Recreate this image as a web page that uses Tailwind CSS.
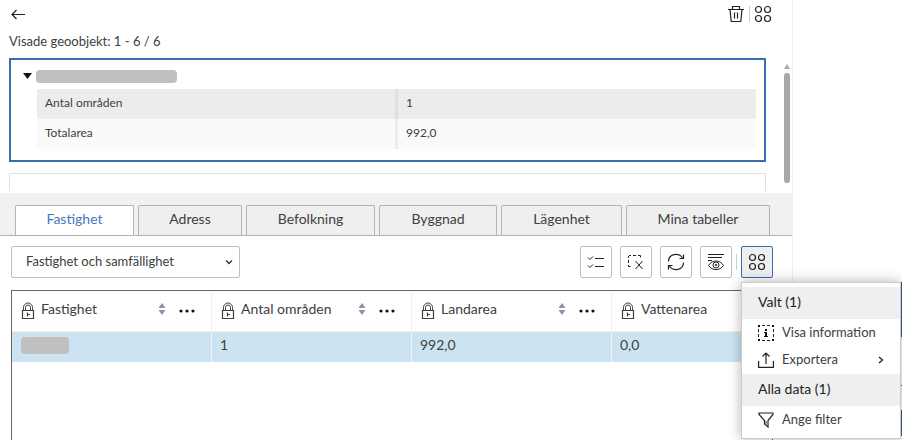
<!DOCTYPE html>
<html lang="sv">
<head>
<meta charset="utf-8">
<meta name="viewport" content="width=device-width, initial-scale=1">
<title>Fastighetsinformation</title>
<script src="https://cdn.jsdelivr.net/npm/@tailwindcss/browser@4"></script>
</head>
<body class="h-screen overflow-hidden bg-white font-[Lato,sans-serif] text-[13px] leading-4 text-[#404040]">
<svg class="hidden" aria-hidden="true">
  <symbol id="grid" viewBox="0 0 18 18"><g fill="none" stroke="currentColor" stroke-width="1.2"><circle cx="4.500" cy="4.500" r="3"/><circle cx="13.500" cy="4.500" r="3"/><circle cx="4.500" cy="13.500" r="3"/><circle cx="13.500" cy="13.500" r="3"/></g></symbol>
  <symbol id="lock" viewBox="0 0 14 18"><g fill="none" stroke="currentColor"><path d="M1.500 8.500h11v8h-11z" stroke-width="1.200"/><path d="M2.500 8V5.500a4.500 4.500 0 0 1 9 0V8M4.500 8V5.500a2.500 2.500 0 0 1 5 0V8"/><path d="M6.500 10.500v4M7 12.500h2" stroke-width="1.200"/></g></symbol>
  <symbol id="sort" viewBox="0 0 8 12"><path d="M4 0 7.500 5h-7zM4 12 .5 7h7z" fill="#8c93a3"/></symbol>
  <symbol id="dots" viewBox="0 0 16 4"><g fill="#111"><circle cx="2" cy="2" r="1.600"/><circle cx="8" cy="2" r="1.600"/><circle cx="14" cy="2" r="1.600"/></g></symbol>
</svg>
<div class="flex h-full">
  <main class="flex min-w-0 flex-1 flex-col border-r border-[#eeeeee]">
    <section class="relative h-[193px] shrink-0 overflow-hidden pl-[9px] pr-[26px]">
      <header class="-mr-1.5 flex h-[27px] items-center justify-between">
        <button type="button" aria-label="Tillbaka" class="pl-0.5 text-[#222222]"><svg class="h-3 w-[15px]" viewBox="0 0 15 12" fill="none" stroke="currentColor" stroke-width="1.200"><path d="M14 6.500H1M5.500 2 1 6.500 5.500 11"/></svg></button>
        <div class="flex items-center gap-1 text-[#222222]">
          <button type="button" aria-label="Ta bort"><svg class="size-[18px]" viewBox="0 0 18 18" fill="none" stroke="currentColor" stroke-width="1.200"><path d="M1 4.500h16M5.500 4V1.500h7V4M3 4.500l1.200 12h9.600L15 4.500M7.500 7.500v6M10.500 7.500v6"/></svg></button>
          <span class="h-4 w-px bg-[#cccccc]"></span>
          <button type="button" aria-label="Åtgärder"><svg class="size-[18px]"><use href="#grid"/></svg></button>
        </div>
      </header>
      <p class="mt-[6px]">Visade geoobjekt: 1 - 6 / 6</p>
      <article class="mt-[9px] h-[104px] border-2 border-[#3a6bb3] pl-[26px] pr-2 pt-1.5">
        <div class="-ml-3.5 flex h-5 items-center gap-1">
          <button type="button" aria-label="Fäll ihop" aria-expanded="true"><svg class="h-1.5 w-[9px]" viewBox="0 0 9 6"><path d="M0 0h9L4.500 6z" fill="#111"/></svg></button>
          <span class="h-[13px] w-[141px] rounded-sm bg-[#c0c0c0]"></span>
        </div>
        <table class="mt-[3px] w-full table-fixed border-collapse text-[12px]">
          <tbody>
            <tr class="h-[30px] bg-[#ececec]"><th scope="row" class="border-r-3 border-[#e0e0e0] px-2 pb-0.5 pt-0 text-left font-normal">Antal områden</th><td class="px-2 pb-0.5 pt-0">1</td></tr>
            <tr class="h-[30px] bg-[#fafafa]"><th scope="row" class="border-r-3 border-[#ececec] px-2 pb-0.5 pt-0 text-left font-normal">Totalarea</th><td class="px-2 pb-0.5 pt-0">992,0</td></tr>
          </tbody>
        </table>
      </article>
      <article class="mt-[11px] h-[18px] border border-b-0 border-[#e0e0e0]"></article>
      <div class="absolute right-0.5 top-[64px] flex w-1.5 flex-col items-center" aria-hidden="true">
        <svg class="h-[5px] w-1.5" viewBox="0 0 6 5"><path d="M3 0 6 5H0z" fill="#aaa"/></svg>
        <span class="mt-1 h-[110px] w-full rounded-full bg-[#a8a8a8]"></span>
      </div>
    </section>

    <nav class="flex h-[43px] shrink-0 items-end gap-1 border-b border-[#b3b3b3] bg-[#f1f1f1] pl-[15px] text-[14px]" role="tablist">
      <button type="button" role="tab" aria-selected="true" class="h-[30px] w-[119px] rounded-t-xs border border-b-0 border-[#b3b3b3] bg-white pb-1 text-[#4478c4]">Fastighet</button>
      <button type="button" role="tab" class="h-[30px] w-[104px] rounded-t-xs border border-b-0 border-[#b3b3b3] bg-[#efefef] pb-1">Adress</button>
      <button type="button" role="tab" class="h-[30px] w-[129px] rounded-t-xs border border-b-0 border-[#b3b3b3] bg-[#efefef] pb-1">Befolkning</button>
      <button type="button" role="tab" class="h-[30px] w-[118px] rounded-t-xs border border-b-0 border-[#b3b3b3] bg-[#efefef] pb-1">Byggnad</button>
      <button type="button" role="tab" class="h-[30px] w-[121px] rounded-t-xs border border-b-0 border-[#b3b3b3] bg-[#efefef] pb-1">Lägenhet</button>
      <button type="button" role="tab" class="h-[30px] w-[144px] rounded-t-xs border border-b-0 border-[#b3b3b3] bg-[#efefef] pb-1">Mina tabeller</button>
    </nav>

    <section class="flex min-h-0 flex-1 flex-col pl-[11px] pr-[19px] pt-[10px]">
      <div class="flex h-8 shrink-0 items-center justify-between">
        <div class="relative">
          <select aria-label="Tabell" class="h-8 w-[229px] appearance-none rounded-xs border border-[#bfbfbf] bg-white pb-0.5 pl-[14px] pr-8 text-[13px]"><option>Fastighet och samfällighet</option></select>
          <svg class="pointer-events-none absolute right-[7px] top-[13px] h-[6px] w-2" viewBox="0 0 8 6" fill="none" stroke="#333" stroke-width="1.400"><path d="m1 1.500 3 3 3-3"/></svg>
        </div>
        <div class="flex items-center gap-2 text-[#222222]">
          <button type="button" aria-label="Markera" class="grid size-8 place-items-center rounded-xs border border-[#bfbfbf]"><svg class="size-[18px]" viewBox="0 0 18 18" fill="none" stroke="currentColor" stroke-width="1"><path d="M8 5.500h9M8 13.500h9M1 4.500l2 2 3-3M1 12.500l2 2 3-3"/></svg></button>
          <button type="button" aria-label="Rensa urval" class="grid size-8 place-items-center rounded-xs border border-[#bfbfbf]"><svg class="size-[18px]" viewBox="0 0 18 18" fill="none" stroke="currentColor" stroke-width="1"><path d="M2 2.500h2M6 2.500h3M11 2.500h2.500v2M1.500 3v2M1.500 7v3M1.500 12v1.500h2M8.500 8l7 8M15.500 8l-7 8"/></svg></button>
          <button type="button" aria-label="Uppdatera" class="grid size-8 place-items-center rounded-xs border border-[#bfbfbf]"><svg class="size-[18px]" viewBox="0 0 18 18" fill="none" stroke="currentColor" stroke-width="1.200"><path d="M1.500 8.500C1.500 1 11.500-1 15.700 5M16.500 9.500C16.500 17 6.500 19 2.300 13M16.500 1.500V5.500h-4M1.500 16.500v-4h4"/></svg></button>
          <div class="flex items-center gap-1">
            <button type="button" aria-label="Visa kolumner" class="grid size-8 place-items-center rounded-xs border border-[#bfbfbf]"><svg class="size-[18px]" viewBox="0 0 18 18" fill="none" stroke="currentColor" stroke-width="1"><path d="M1 1.500h16M1 4.500h14M1 7.500h4M1.500 12.500C5 6.500 13 6.500 16.500 12.500 13 18 5 18 1.500 12.500z"/><circle cx="9" cy="12" r="3"/><circle cx="9" cy="12" r=".8"/></svg></button>
            <span class="h-4 w-px bg-[#cccccc]"></span>
            <button type="button" aria-label="Fler åtgärder" aria-expanded="true" class="grid size-8 place-items-center rounded-xs border border-[#3a6bb3] bg-[#efefef]"><svg class="size-[18px]"><use href="#grid"/></svg></button>
          </div>
        </div>
      </div>

      <div class="mt-3 min-h-0 flex-1 overflow-hidden border border-b-0 border-[#666666]">
        <table class="w-full table-fixed border-separate border-spacing-0 text-left text-[14px]">
          <thead>
            <tr class="h-[41px]">
              <th scope="col" class="w-[200px] border-b border-r border-[#eeeeee] p-0 font-normal"><div class="flex items-center pb-1 pl-[9px] pr-4"><svg class="mr-1.5 mt-1 h-[18px] w-3.5"><use href="#lock"/></svg><span class="flex-1">Fastighet</span><svg class="mr-[13px] h-3 w-2"><use href="#sort"/></svg><svg class="mt-1 h-1 w-4"><use href="#dots"/></svg></div></th>
              <th scope="col" class="w-[200px] border-b border-r border-[#eeeeee] p-0 font-normal"><div class="flex items-center pb-1 pl-[9px] pr-4"><svg class="mr-1.5 mt-1 h-[18px] w-3.5"><use href="#lock"/></svg><span class="flex-1">Antal områden</span><svg class="mr-[13px] h-3 w-2"><use href="#sort"/></svg><svg class="mt-1 h-1 w-4"><use href="#dots"/></svg></div></th>
              <th scope="col" class="w-[200px] border-b border-r border-[#eeeeee] p-0 font-normal"><div class="flex items-center pb-1 pl-[9px] pr-4"><svg class="mr-1.5 mt-1 h-[18px] w-3.5"><use href="#lock"/></svg><span class="flex-1">Landarea</span><svg class="mr-[13px] h-3 w-2"><use href="#sort"/></svg><svg class="mt-1 h-1 w-4"><use href="#dots"/></svg></div></th>
              <th scope="col" class="border-b border-[#eeeeee] p-0 font-normal"><div class="flex items-center pb-1 pl-[9px]"><svg class="mr-1.5 mt-1 h-[18px] w-3.5"><use href="#lock"/></svg><span>Vattenarea</span></div></th>
            </tr>
          </thead>
          <tbody>
            <tr class="h-[30px] bg-[#cce4f2]">
              <td class="border-r border-[#eef5fa] px-[9px] py-0"><span class="mb-1 block h-[17px] w-12 rounded-sm bg-[#c0c0c0]"></span></td>
              <td class="border-r border-[#eef5fa] px-2 pb-1 pt-0">1</td>
              <td class="border-r border-[#eef5fa] px-2 pb-1 pt-0">992,0</td>
              <td class="px-2 pb-1 pt-0">0,0</td>
            </tr>
          </tbody>
        </table>
      </div>
    </section>
  </main>
  <aside class="w-[109px] shrink-0"></aside>
</div>

<div class="absolute right-0 top-[282px] flex w-px flex-col" aria-hidden="true"><span class="h-[55px] bg-[#3a6098]"></span><span class="mt-12 h-px bg-[#555555]"></span><span class="mt-6 h-[26px] bg-[#3a6098]"></span></div>
<div role="menu" class="absolute right-px top-[282px] w-40 border border-[#cccccc] bg-white pb-1 pt-1 shadow-[0_0_12px_rgba(0,0,0,0.3)]">
  <h2 class="flex h-8 items-center bg-[#efefef] px-4 pb-0.5 text-[14px] text-[#222222]">Valt (1)</h2>
  <button type="button" role="menuitem" class="flex h-[27px] w-full items-center gap-2 px-4"><svg class="size-4" viewBox="0 0 16 16" fill="none" stroke="#222"><path d="M4 .5h3M9 .5h3M4 15.500h3M9 15.500h3M.5 4v3M.5 9v3M15.500 4v3M15.500 9v3"/><path d="M0 0h2v2H0zM14 0h2v2h-2zM0 14h2v2H0zM14 14h2v2h-2zM7 4h2v2H7zM6 7h3v4h1v1H6v-1h1V8H6z" fill="#111" stroke="none"/></svg><span class="pb-0.5">Visa information</span></button>
  <button type="button" role="menuitem" class="flex h-7 w-full items-center gap-2 px-4"><svg class="size-4" viewBox="0 0 16 16" fill="none" stroke="#222" stroke-width="1.200"><path d="M.6 9v6.400h14.800V9M8 12V1M4.500 4.500 8 1l3.500 3.500"/></svg><span class="pb-0.5">Exportera</span><svg class="ml-auto h-2 w-[6px]" viewBox="0 0 6 8" fill="none" stroke="#222" stroke-width="1.300"><path d="m1 1 3.500 3L1 7"/></svg></button>
  <h2 class="flex h-8 items-center bg-[#efefef] px-4 pb-0.5 text-[14px] text-[#222222]">Alla data (1)</h2>
  <button type="button" role="menuitem" class="flex h-7 w-full items-center gap-2 px-4"><svg class="size-4" viewBox="0 0 16 16" fill="none" stroke="#222" stroke-width="1.200"><path d="M1 1h14v1.500L10 8.500V15l-3.500-3V8.500L1 2.500z"/><path d="M7 9h2.500v5L7 12z" fill="#999" stroke="none"/></svg><span class="pb-0.5">Ange filter</span></button>
</div>
</body>
</html>
